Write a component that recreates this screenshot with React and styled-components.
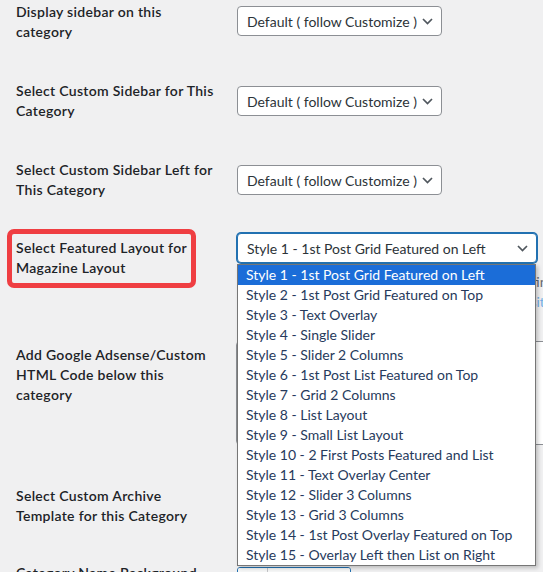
import React from 'react'
import styled, { createGlobalStyle } from 'styled-components'

const layoutOptions = [
  'Style 1 - 1st Post Grid Featured on Left',
  'Style 2 - 1st Post Grid Featured on Top',
  'Style 3 - Text Overlay',
  'Style 4 - Single Slider',
  'Style 5 - Slider 2 Columns',
  'Style 6 - 1st Post List Featured on Top',
  'Style 7 - Grid 2 Columns',
  'Style 8 - List Layout',
  'Style 9 - Small List Layout',
  'Style 10 - 2 First Posts Featured and List',
  'Style 11 - Text Overlay Center',
  'Style 12 - Slider 3 Columns',
  'Style 13 - Grid 3 Columns',
  'Style 14 - 1st Post Overlay Featured on Top',
  'Style 15 - Overlay Left then List on Right',
]

const GlobalStyle = createGlobalStyle`
  html, body {
    margin: 0;
    background: #f0f0f1;
  }
  body {
    font-family: Lato, "Noto Sans", sans-serif;
    overflow: hidden;
  }
`

const Page = styled.div`
  position: relative;
  height: 572px;
  overflow: hidden;
  padding-left: 16px;
`

const Row = styled.div`
  display: grid;
  grid-template-columns: 200px 1fr;
  column-gap: 21px;
  height: ${p => p.$h}px;
`

const Label = styled.div`
  padding-top: ${p => p.$top}px;
  font-size: 14px;
  font-weight: 600;
  letter-spacing: 0.3px;
  line-height: 20px;
  color: #1d2327;
`

const LabelText = styled.span`
  position: relative;
  display: inline-block;
`

const Highlight = styled.span`
  position: absolute;
  left: -9px;
  top: -9px;
  width: 189px;
  height: 59px;
  box-sizing: border-box;
  border: 5px solid #ef3e42;
  border-radius: 7px;
`

const Control = styled.div`
  padding-top: ${p => p.$top}px;
  min-width: 0;
`

const SelectWrap = styled.div`
  position: relative;
  width: ${p => p.$w}px;
`

const SelectBox = styled.div`
  height: 30px;
  box-sizing: border-box;
  display: flex;
  align-items: center;
  justify-content: space-between;
  padding: 0 8px 0 9px;
  background: #fff;
  border: 1px solid ${p => (p.$focus ? '#2271b1' : '#8c8f94')};
  box-shadow: ${p => (p.$focus ? '0 0 0 1px #2271b1' : 'none')};
  border-radius: 4px;
  font-size: 14px;
  color: #2c3338;
  white-space: nowrap;
`

const Options = styled.ul`
  position: absolute;
  z-index: 10;
  top: 31px;
  left: 0;
  width: 299px;
  margin: 0;
  padding: 0;
  list-style: none;
  box-sizing: border-box;
  background: #fff;
  border: 1px solid #767676;
  box-shadow: 2px 2px 4px rgba(0, 0, 0, 0.22);
`

const Option = styled.li`
  height: 20px;
  line-height: 20px;
  padding-left: 8px;
  font-size: 14px;
  white-space: nowrap;
  color: ${p => (p.$active ? '#fff' : '#263a5c')};
  background: ${p => (p.$active ? '#1b6dd8' : 'transparent')};
`

const Description = styled.p`
  margin: 9px 0 0;
  font-size: 14px;
  line-height: 20px;
  color: #646970;
  white-space: nowrap;
  a {
    color: #72aee6;
    text-decoration: none;
  }
`

const TextArea = styled.div`
  width: 420px;
  height: 104px;
  margin-left: -1px;
  box-sizing: border-box;
  background: #fff;
  border: 1px solid #8c8f94;
  border-radius: 4px;
`

const ColorButton = styled.div`
  display: inline-flex;
  height: 30px;
  box-sizing: border-box;
  border: 1px solid #2271b1;
  border-radius: 3px;
  overflow: hidden;
  font-size: 13px;
  color: #2271b1;
`

const Swatch = styled.span`
  width: 29px;
  background: #f6f7f7;
  border-right: 1px solid #c3c4c7;
`

const ColorText = styled.span`
  width: 74px;
  padding-left: 8px;
  line-height: 28px;
  background: #f6f7f7;
`

const Chevron = () => (
  <svg width="11" height="7" viewBox="0 0 11 7" fill="none">
    <polyline points="1,1 5.5,5.5 10,1" stroke="#50575e" strokeWidth="1.7" />
  </svg>
)

const Select = ({ value, width, focus, children }) => (
  <SelectWrap $w={width}>
    <SelectBox $focus={focus}>
      <span>{value}</span>
      <Chevron />
    </SelectBox>
    {children}
  </SelectWrap>
)

const DEFAULT = 'Default ( follow Customize )'

export default function App() {
  return (
    <>
      <GlobalStyle />
      <Page>
        <Row $h={79}>
          <Label $top={2}>Display sidebar on this category</Label>
          <Control $top={6}>
            <Select value={DEFAULT} width={205} />
          </Control>
        </Row>
        <Row $h={79}>
          <Label $top={2}>Select Custom Sidebar for This Category</Label>
          <Control $top={7}>
            <Select value={DEFAULT} width={205} />
          </Control>
        </Row>
        <Row $h={73}>
          <Label $top={2}>Select Custom Sidebar Left for This Category</Label>
          <Control $top={7}>
            <Select value={DEFAULT} width={205} />
          </Control>
        </Row>
        <Row $h={108}>
          <Label $top={7}>
            <LabelText>
              Select Featured Layout for Magazine Layout
              <Highlight />
            </LabelText>
          </Label>
          <Control $top={2}>
            <Select value={layoutOptions[0]} width={300} focus>
              <Options>
                {layoutOptions.map((opt, i) => (
                  <Option key={opt} $active={i === 0}>
                    {opt}
                  </Option>
                ))}
              </Options>
            </Select>
            <Description>
              Only works when a category uses a Magazine listing
              <br />
              <a href="#layouts">View a live preview of each layout on our demo site for more</a>
            </Description>
          </Control>
        </Row>
        <Row $h={145}>
          <Label $top={6}>Add Google Adsense/Custom HTML Code below this category</Label>
          <Control $top={2}>
            <TextArea />
          </Control>
        </Row>
        <Row $h={77}>
          <Label $top={2}>Select Custom Archive Template for this Category</Label>
          <Control $top={7}>
            <Select value={DEFAULT} width={205} />
          </Control>
        </Row>
        <Row $h={60}>
          <Label $top={2}>Category Name Background Color</Label>
          <Control $top={6}>
            <ColorButton>
              <Swatch />
              <ColorText>Select Color</ColorText>
            </ColorButton>
          </Control>
        </Row>
      </Page>
    </>
  )
}
